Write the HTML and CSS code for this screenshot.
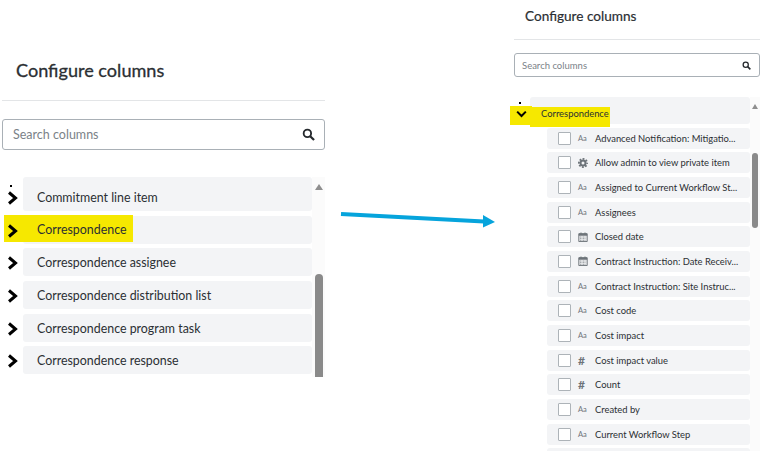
FILE: index.html
```html
<!doctype html>
<html>
	<head>
		<meta charset="utf-8" />
		<title>Configure columns</title>
		<link rel="stylesheet" href="styles.css">
	</head>
	<body>
		<svg width="0" height="0" class="defs">
			<symbol id="i-chevron" viewBox="0 0 12 14"><path d="M2 1.500 8.500 7 2 12.500" fill="none" stroke="currentColor" stroke-width="3"/></symbol>
			<symbol id="i-down" viewBox="0 0 14 10"><path d="M1.500 2 7 7.500 12.500 2" fill="none" stroke="currentColor" stroke-width="2.600"/></symbol>
			<symbol id="i-search" viewBox="0 0 14 14"><circle cx="5.800" cy="5.800" r="4" fill="none" stroke="currentColor" stroke-width="2"/><path d="M8.800 8.800 13 13" stroke="currentColor" stroke-width="2.400"/></symbol>
			<symbol id="i-gear" viewBox="0 0 12 12"><g fill="none" stroke="currentColor"><circle cx="6" cy="6" r="3" stroke-width="2.400"/><circle cx="6" cy="6" r="4.900" stroke-width="2.200" stroke-dasharray="2.200 1.650" stroke-dashoffset="1.100"/></g></symbol>
			<symbol id="i-cal" viewBox="0 0 12 12"><path d="M1 2h10v9.500H1z" fill="none" stroke="currentColor" stroke-width="1.200"/><path d="M1 2h10v2.500H1zM3 .5h1.200V2H3zM7.800 .5H9V2H7.800z" fill="currentColor"/><path d="M2.500 6h7M2.500 8h7M2.500 10h7" stroke="currentColor" stroke-dasharray="1 .8"/></symbol>
		</svg>

		<section class="panel panel-big">
			<h2>Configure columns</h2>
			<div class="search">
				<span>Search columns</span>
				<svg class="search-icon"><use href="#i-search"/></svg>
			</div>
			<div class="list">
				<div class="rows">
					<div class="group">
						<span class="stub"></span>
						<svg class="chev"><use href="#i-chevron"/></svg>
						<div class="group-row first">Commitment line item</div>
					</div>
					<div class="group">
						<span class="marker"></span>
						<svg class="chev"><use href="#i-chevron"/></svg>
						<div class="group-row"><span class="marked">Correspondence</span></div>
					</div>
					<div class="group">
						<svg class="chev"><use href="#i-chevron"/></svg>
						<div class="group-row">Correspondence assignee</div>
					</div>
					<div class="group">
						<svg class="chev"><use href="#i-chevron"/></svg>
						<div class="group-row">Correspondence distribution list</div>
					</div>
					<div class="group">
						<svg class="chev"><use href="#i-chevron"/></svg>
						<div class="group-row">Correspondence program task</div>
					</div>
					<div class="group">
						<svg class="chev"><use href="#i-chevron"/></svg>
						<div class="group-row">Correspondence response</div>
					</div>
				</div>
				<div class="track">
					<i class="up"></i>
					<i class="thumb"></i>
				</div>
			</div>
		</section>

		<svg class="arrow" width="160" height="24" viewBox="0 0 160 24">
			<path d="M1 5 144 12.500" stroke="#06a4dc" stroke-width="4" fill="none"/>
			<path d="M143 6 155 13 143 18.500z" fill="#06a4dc"/>
		</svg>

		<section class="panel panel-small">
			<h2>Configure columns</h2>
			<div class="search">
				<span>Search columns</span>
				<svg class="search-icon"><use href="#i-search"/></svg>
			</div>
			<div class="list">
				<div class="rows">
					<div class="group">
						<span class="stub"></span>
						<span class="marker"></span>
						<svg class="chev"><use href="#i-down"/></svg>
						<div class="group-row"><span class="marked">Correspondence</span></div>
					</div>
					<div class="item"><b></b><em>Aa</em><span>Advanced Notification: Mitigatio...</span></div>
					<div class="item"><b></b><svg><use href="#i-gear"/></svg><span>Allow admin to view private item</span></div>
					<div class="item"><b></b><em>Aa</em><span>Assigned to Current Workflow St...</span></div>
					<div class="item"><b></b><em>Aa</em><span>Assignees</span></div>
					<div class="item"><b></b><svg><use href="#i-cal"/></svg><span>Closed date</span></div>
					<div class="item"><b></b><svg><use href="#i-cal"/></svg><span>Contract Instruction: Date Receiv...</span></div>
					<div class="item"><b></b><em>Aa</em><span>Contract Instruction: Site Instruc...</span></div>
					<div class="item"><b></b><em>Aa</em><span>Cost code</span></div>
					<div class="item"><b></b><em>Aa</em><span>Cost impact</span></div>
					<div class="item"><b></b><em class="hash">#</em><span>Cost impact value</span></div>
					<div class="item"><b></b><em class="hash">#</em><span>Count</span></div>
					<div class="item"><b></b><em>Aa</em><span>Created by</span></div>
					<div class="item"><b></b><em>Aa</em><span>Current Workflow Step</span></div>
					<div class="item last"></div>
				</div>
				<div class="track">
					<i class="up"></i>
					<i class="thumb"></i>
				</div>
			</div>
		</section>
	</body>
</html>
```

FILE: styles.css
```css
* {
	box-sizing: border-box;
}

html,
body {
	height: 451px;
	overflow: hidden;
}

body {
	--color-fg: #2b2f33;
	--color-row: #f3f4f6;
	--color-mark: #f6e800;
	display: flex;
	align-items: flex-start;
	margin: 0;
	background: #fff;
	color: var(--color-fg);
	font-family: Lato, sans-serif;
}

.defs {
	position: absolute;
}

/* no medium weight of Lato here, so thicken the regular one a little */
.panel h2 {
	margin: 0;
	font-weight: 400;
	-webkit-text-stroke: 0.3px currentColor;
}

.search {
	display: flex;
	align-items: center;
	justify-content: space-between;
	border: 1px solid #a9b0b6;
	border-radius: 3px;
	color: #7b8288;
}

.search-icon {
	color: #25292d;
}

.list {
	display: flex;
	overflow: hidden;
}

.rows {
	flex: 1;
	min-width: 0;
}

.track {
	position: relative;
	background: #fbfbfb;
}

.up {
	position: absolute;
	width: 0;
	height: 0;
	border-style: solid;
	border-color: transparent transparent #8f8f8f;
	border-top-width: 0;
}

.thumb {
	position: absolute;
	background: #8a8a8a;
	border-radius: 4px 4px 0 0;
}

.group {
	position: relative;
	display: flex;
	align-items: center;
}

.group-row {
	flex: 1;
	background: var(--color-row);
	border-radius: 3px;
}

.chev {
	position: relative;
	color: #000;
	flex: none;
}

.marked {
	position: relative;
	display: inline-block;
	background: var(--color-mark);
}

.marker {
	position: absolute;
	background: var(--color-mark);
}

.stub {
	position: absolute;
	width: 2px;
	height: 2px;
	background: #000;
}

/* left panel */
.panel-big {
	width: 323px;
	flex: none;
	margin: 58px 0 0 2px;
}

.panel-big h2 {
	padding: 0 0 18px 14px;
	font-size: 18.100px;
	line-height: 24px;
	border-bottom: 1px solid #e3e5e7;
}

.panel-big .search {
	height: 31px;
	margin-top: 18px;
	padding: 0 9px 0 10px;
	font-size: 12.500px;
}

.panel-big .search-icon {
	width: 13px;
	height: 13px;
}

.panel-big .list {
	height: 200px;
	margin-top: 27px;
}

.panel-big .rows {
	padding-left: 21px;
}

.panel-big .track {
	width: 13px;
}

.panel-big .up {
	top: 7px;
	left: 3px;
	border-width: 0 4px 6px;
}

.panel-big .thumb {
	top: 97px;
	bottom: 0;
	left: 3px;
	right: 2px;
}

.panel-big .group {
	height: 28px;
	margin-bottom: 4.700px;
	font-size: 12.400px;
}

.panel-big .group-row {
	height: 28px;
	line-height: 30px;
	padding-left: 14px;
}

.panel-big .group-row.first {
	height: 34px;
	line-height: 42px;
	margin-top: -6px;
}

.panel-big .group:first-child {
	margin-top: 6px;
}

.panel-big .stub {
	left: -13px;
	top: 2px;
}

.panel-big .chev {
	width: 12px;
	height: 14px;
	margin-top: 2px;
	margin-left: -16px;
	margin-right: 4px;
}

.panel-big .marked {
	height: 27px;
	margin: -1px 0 -1px -14px;
	padding-left: 14px;
	padding-right: 7px;
	line-height: 29px;
	vertical-align: top;
}

.panel-big .marker {
	left: -19px;
	top: -1px;
	width: 20px;
	height: 27px;
}

/* arrow between the panels */
.arrow {
	flex: none;
	margin: 209px 0 0 15px;
}

/* right panel */
.panel-small {
	width: 246px;
	flex: none;
	margin: 7px 0 0 14px;
}

.panel-small h2 {
	padding: 0 0 14px 11px;
	font-size: 13.600px;
	line-height: 18px;
	border-bottom: 1px solid #e3e5e7;
	-webkit-text-stroke-width: 0.2px;
}

.panel-small .search {
	height: 24px;
	margin-top: 13px;
	padding: 0 8px 0 7px;
	font-size: 9.500px;
}

.panel-small .search-icon {
	width: 9px;
	height: 9px;
}

.panel-small .list {
	height: 360px;
	margin-top: 20px;
	overflow: visible;
}

.panel-small .rows {
	padding-left: 16px;
}

.panel-small .track {
	width: 10px;
}

.panel-small .up {
	top: 7px;
	left: 2px;
	border-width: 0 3px 5px;
}

.panel-small .thumb {
	top: 56px;
	height: 75px;
	left: 2px;
	right: 2px;
	border-radius: 3px;
}

.panel-small .group {
	height: 27px;
	margin-bottom: 3.500px;
	font-size: 9.400px;
}

.panel-small .group-row {
	height: 27px;
	line-height: 27px;
	padding-left: 11px;
}

.panel-small .stub {
	left: -11px;
	top: 5px;
}

.panel-small .chev {
	width: 11px;
	height: 8px;
	margin-top: 7px;
	margin-left: -14px;
	margin-right: 3px;
}

.panel-small .marked {
	margin-left: -11px;
	padding-left: 11px;
	padding-right: 1px;
	height: 20px;
	line-height: 13px;
	margin-top: 10px;
	vertical-align: top;
}

.panel-small .marker {
	left: -20px;
	top: 9px;
	width: 22px;
	height: 19px;
}

.item {
	display: flex;
	align-items: center;
	height: 21px;
	margin: 0 0 3.700px 17px;
	padding-left: 11px;
	background: var(--color-row);
	border-radius: 3px;
	font-size: 9.400px;
	white-space: nowrap;
}

.item b {
	width: 13px;
	height: 13px;
	border: 1.500px solid #adb3b8;
	border-radius: 1px;
	background: #fff;
	flex: none;
	margin-right: 7px;
}

.item em {
	width: 17px;
	font-style: normal;
	font-size: 7.500px;
	color: #6d7379;
	flex: none;
}

.item em.hash {
	font-size: 12px;
	line-height: 13px;
	font-weight: 700;
}

.item svg {
	width: 10px;
	height: 10px;
	margin-right: 7px;
	color: #6d7379;
	flex: none;
}
```
